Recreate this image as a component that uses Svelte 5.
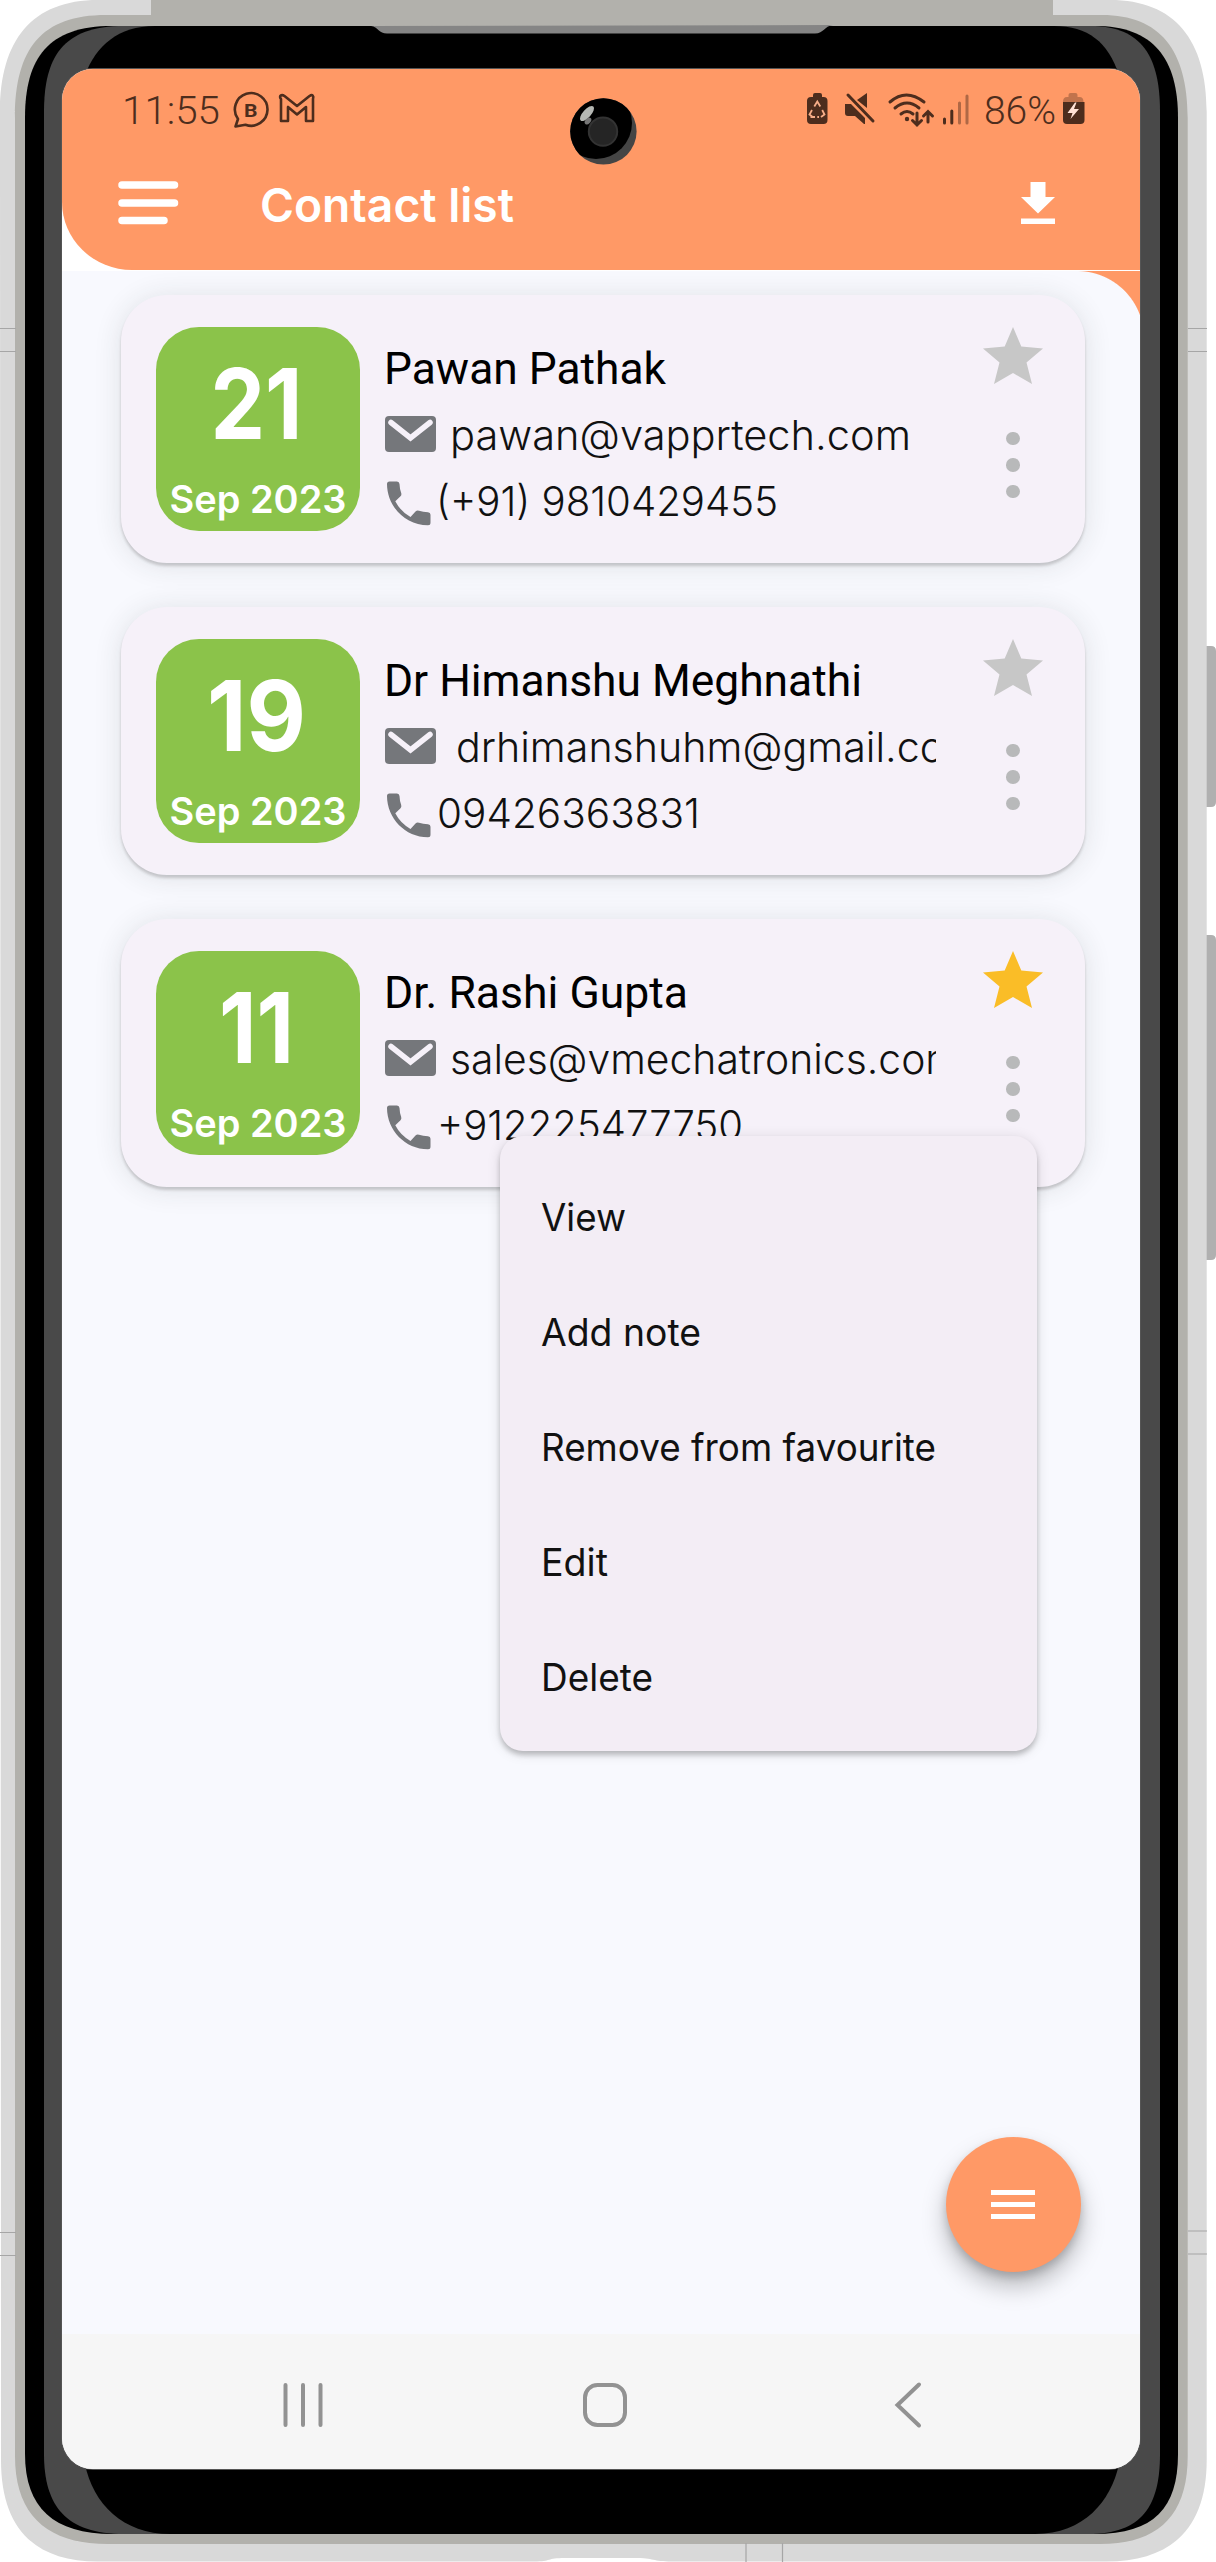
<script>
  const contacts = [
    { day: '21', dayWidth: 92, date: 'Sep 2023', name: 'Pawan Pathak', nameWidth: 282, email: 'pawan@vapprtech.com', emailX: 65, emailWidth: 461, phone: '(+91) 9810429455', phoneX: 51, phoneWidth: 342, starred: false },
    { day: '19', dayWidth: 99, date: 'Sep 2023', name: 'Dr Himanshu Meghnathi', nameWidth: 478, email: 'drhimanshuhm@gmail.com', emailX: 71, emailWidth: 524, phone: '09426363831', phoneX: 52, phoneWidth: 263, starred: false },
    { day: '11', dayWidth: 75, date: 'Sep 2023', name: 'Dr. Rashi Gupta', nameWidth: 304, email: 'sales@vmechatronics.com', emailX: 65, emailWidth: 511, phone: '+912225477750', phoneX: 52, phoneWidth: 306, starred: true }
  ];

  const menuItems = [
    { label: 'View', width: 85 },
    { label: 'Add note', width: 160 },
    { label: 'Remove from favourite', width: 395 },
    { label: 'Edit', width: 67 },
    { label: 'Delete', width: 112 }
  ];
</script>

<main class="device">
  <svg class="frame" viewBox="0 0 1216 2562" aria-hidden="true">
    <path fill="#b0b0b0" d="M1200 646h11q5 0 5 5v151q0 5-5 5h-11zM1200 935h11q5 0 5 5v315q0 5-5 5h-11z" />
    <path fill="#d9d9d9" d="M0 112C0 40 32 0 98 0H1110C1175 0 1206.700 40 1206.700 112V2460C1206.700 2528 1172 2561.500 1106 2561.500H672C652 2561.500 655 2558 634 2558H565C546 2558 552 2561.500 534 2561.500H98C34 2561.500 1 2528 1 2460Z" />
    <path fill="#b2b1ac" d="M15 118C15 48 42 15 106 15H151V0H1053V15H1102C1160 15 1187.700 50 1187.700 118V2456C1187.700 2516 1158 2544 1100 2544H108C48 2544 15 2516 15 2456Z" />
    <path fill="#000" d="M25 118C25 58 48 26 112 26H1095C1153 26 1178 58 1178 118V2454C1178 2508 1154 2534 1095 2534H112C54 2534 25 2508 25 2454Z" />
    <path fill="#494949" d="M44 112C44 58 62 26 124 26H1090C1143 26 1160 58 1160 112V2454C1160 2506 1142 2534 1088 2534H124C66 2534 44 2506 44 2454Z" />
    <path fill="#000" d="M85 75C96 46 118 26 155 26H1054C1088 26 1108 42 1119 75V2464C1111 2501 1084 2534 1035 2534H170C123 2534 93 2504 85 2464Z" />
    <path fill="#858585" d="M371 26C378 27 379 33.500 387 33.500H815C824 33.500 824 26 833 25Z" />
    <path stroke="#a6a6a6" stroke-width="1.200" d="M0 328.500H16M0 351.500H16M1188 328.500H1207M1188 351.500H1207M0 2232.500H16M0 2255.500H16M1188 2231H1207M1188 2254H1207M746 2543V2562M782.500 2543V2562" />
  </svg>

  <section class="screen">
    <header class="header">
      <div class="status">
        <svg class="status-left" viewBox="0 0 210 50">
          <text x="0" y="33.500" font-size="38" textLength="98" lengthAdjust="spacingAndGlyphs">11:55</text>
          <g class="outline">
            <path d="M117 36.500L119.500 29A16.300 16.300 0 1 1 127 34.700Z" />
            <path d="M162.500 9C160 6 163 4 166 6L178.500 16L191 6C194 4 195.500 6 194.500 9V31H187.500V17L178.500 24.500L169.500 17V31H162.500Z" />
          </g>
          <text class="badge" x="122" y="27" font-size="19" textLength="13.500" lengthAdjust="spacingAndGlyphs">B</text>
        </svg>
        <svg class="status-right" viewBox="0 0 290 50">
          <path d="M7 7V5q0-2 2-2h5q2 0 2 2v2h1.500q4 0 4 4v19q0 4-4 4H5q-4 0-4-4V11q0-4 4-4z" />
          <path class="pale" d="M8.300 16.500L11.300 11.500L14.300 16.500M16.200 20L18.500 24.500L15 27M11.300 27H13M6.700 27L3.500 24.500L6 20M9 27H4.500" />
          <path d="M39 14H45L59 28V34H58L49 26H42Q39 26 39 23Z" />
          <path d="M51 10L61 3V18Z" />
          <path class="thick" d="M42 5L67 31" />
          <path class="thick" d="M84 12Q100-2 118 12M89 18Q101 8 113 18M95 24Q101 19 107 24" />
          <circle cx="101" cy="29" r="2.200" />
          <path class="thick" d="M111 23V35M106.500 30.500L111 35L115.500 30.500M122 32V22M117.500 26L122 21.500L126.500 26" />
          <path class="thick" d="M138.500 29V33M145.800 21V33" />
          <path class="thick faint" d="M153.500 13V33M161 6V33" />
          <text x="178" y="33.500" font-size="38" textLength="72" lengthAdjust="spacingAndGlyphs">86%</text>
          <path class="ghost" d="M262.500 7V5q0-2 2-2h5q2 0 2 2v2h2q4 0 4 5H257q0-5 4-5z" />
          <path d="M257 12H278.500V30q0 4-4 4H261q-4 0-4-4z" />
          <path fill="#ffe2d5" d="M269 12.500L261.500 23H266.500L264.500 29L273 19H268L270.500 12.500Z" />
        </svg>
      </div>
      <div class="toolbar">
        <svg class="hamburger" viewBox="0 0 60 44"><path d="M4 4H56.500M4 22H56.500M4 39.500H46" /></svg>
        <svg class="title" viewBox="0 0 260 60"><text x="0" y="41" font-size="47" textLength="254" lengthAdjust="spacingAndGlyphs">Contact list</text></svg>
        <svg class="download" viewBox="0 0 34 42"><path d="M9.500 0H24.500V15H34L17 31.500L0 15H9.500ZM0 36.500H34V42H0Z" /></svg>
      </div>
    </header>

    <div class="content">
      <div class="list">
        {#each contacts as c}
          <article class="card">
            <div class="tile">
              <svg viewBox="0 0 204 204">
                <text class="day" x={100.5 - c.dayWidth / 2} y="111.500" font-size="98" textLength={c.dayWidth} lengthAdjust="spacingAndGlyphs">{c.day}</text>
                <text class="date" x="13.500" y="186" font-size="38.500" textLength="177" lengthAdjust="spacingAndGlyphs">{c.date}</text>
              </svg>
            </div>
            <div class="info">
              <svg class="name" viewBox="0 0 552 66"><text x="-1" y="57" font-size="44" textLength={c.nameWidth} lengthAdjust="spacingAndGlyphs">{c.name}</text></svg>
              <svg class="line" viewBox="0 0 552 67">
                <rect x="0" y="23" width="51" height="36" rx="4" />
                <path class="flap" d="M6 29.500L25.500 45L45 29.500" />
                <text x={c.emailX} y="57" font-size="41" textLength={c.emailWidth} lengthAdjust="spacingAndGlyphs">{c.email}</text>
              </svg>
              <svg class="line" viewBox="0 0 552 67">
                <path d="M4.500 21.500H12Q14.300 21.500 14.500 24Q14.700 29 16.200 33Q16.800 35 15.500 36.300L10.300 41.300Q15.500 51.500 25.500 56.900L30.500 51.500Q32 50.200 34 50.800Q38 52 43 52.200Q45.500 52.400 45.500 54.700V62.800Q45.500 65.300 43 65.300C20 65.300 2 46 2 24Q2 21.500 4.500 21.500Z" />
                <text x={c.phoneX} y="56" font-size="41" textLength={c.phoneWidth} lengthAdjust="spacingAndGlyphs">{c.phone}</text>
              </svg>
            </div>
            <div class="actions">
              <svg class="star" class:starred={c.starred} viewBox="0 0 60 57"><path d="M30 0L38.300 19.500L60 21.500L43.500 35.500L49 57L30 46L11 57L16.500 35.500L0 21.500L21.700 19.500Z" /></svg>
              <div class="dots"><i></i><i></i><i></i></div>
            </div>
          </article>
        {/each}
      </div>
      <button class="fab" aria-label="Menu"><svg viewBox="0 0 44 29"><path d="M0 0H44V5H0ZM0 12H44V17H0ZM0 24H44V29H0Z" /></svg></button>
    </div>

    <nav class="nav">
      <svg viewBox="0 0 44 46"><path d="M4.500 3V43M22 3V43M39.500 3V43" /></svg>
      <svg viewBox="0 0 44 46"><rect x="2" y="3" width="40" height="40" rx="12.500" /></svg>
      <svg viewBox="0 0 44 46"><path d="M34 2.500L12.500 23L34 43.500" /></svg>
    </nav>
  </section>

  <div class="menu">
    {#each menuItems as item}
      <svg viewBox="0 0 460 115"><text x="0" y="74" font-size="38" textLength={item.width} lengthAdjust="spacingAndGlyphs">{item.label}</text></svg>
    {/each}
  </div>

  <svg class="camera" viewBox="570 98 67 67" aria-hidden="true">
    <clipPath id="camera-body"><circle cx="603.400" cy="131.400" r="33.200" /></clipPath>
    <g clip-path="url(#camera-body)">
      <rect x="570" y="98" width="67" height="67" fill="#454545" />
      <circle cx="596" cy="123" r="36" />
    </g>
    <circle cx="603" cy="131.600" r="14.200" fill="#252525" stroke="#333" stroke-width="2" />
    <ellipse cx="587" cy="113.500" rx="9.500" ry="4" fill="#b5b8b4" transform="rotate(-48 587 113.500)" />
    <ellipse cx="588" cy="121" rx="4" ry="2.600" fill="#777" transform="rotate(-48 588 121)" />
  </svg>
</main>

<style>
  :global(body) { margin: 0; background: #fff; }

  .device { position: relative; width: 1216px; height: 2562px; box-sizing: border-box; padding: 69px 0 0 62px; overflow: hidden; font-family: Inter, "Liberation Sans", sans-serif; }
  .frame { position: absolute; inset: 0; width: 1216px; height: 2562px; }
  svg { display: block; flex: none; overflow: visible; }

  .screen { position: relative; display: flex; flex-direction: column; width: 1078px; height: 2400px; border-radius: 31px; overflow: hidden; background: #fff; box-shadow: 0 0 0 1px #555; }

  .header { height: 201px; flex: none; background: #ff9966; border-bottom-left-radius: 70px 68px; }
  .status { display: flex; justify-content: space-between; height: 72px; padding: 21px 44px 0 60px; box-sizing: border-box; }
  .status-left { width: 210px; height: 50px; }
  .status-left .outline { transform: translateX(-3.5px); }
  .status-right { width: 290px; height: 50px; }
  .status svg { fill: #4d2d1d; }
  .status text { font-family: Roboto, sans-serif; font-weight: 350; }
  .status .badge { font-family: Roboto, sans-serif; font-weight: 700; }
  .outline { fill: none; stroke: #4d2d1d; stroke-width: 2.6; stroke-linejoin: round; }
  .thick { fill: none; stroke: #4d2d1d; stroke-width: 3; stroke-linecap: round; }
  .pale { fill: none; stroke: #f6ad88; stroke-width: 1.8; }
  .faint { opacity: 0.45; }
  .ghost { opacity: 0.35; }

  .toolbar { display: flex; align-items: flex-start; padding: 40px 85.5px 0 55.5px; }
  .hamburger { width: 60px; height: 44px; }
  .hamburger path { stroke: #fff; stroke-width: 7.5; stroke-linecap: round; }
  .title { width: 260px; height: 60px; margin-left: 82px; fill: #fff; font-weight: 600; }
  .download { width: 34px; height: 42px; margin: 0.5px 0 0 auto; fill: #fff; }

  .content { position: relative; flex: 1; background: radial-gradient(circle at 0 100%, #f8f9fe 66.5px, #ff9966 67.5px) top right / 63.5px 67px no-repeat, #f8f9fe; margin-top: 1px; }
  .list { display: flex; flex-direction: column; gap: 44px; padding: 24px 55px 0 59px; }
  .card { display: flex; height: 268px; box-sizing: border-box; padding: 32px 35px; border-radius: 46px; background: #f6f1f9; box-shadow: 0 3px 3px rgba(0, 0, 0, 0.17), 0 2px 28px rgba(40, 50, 50, 0.12); }
  .tile { width: 204px; height: 204px; flex: none; border-radius: 43px; background: #8bc34a; }
  .tile svg { width: 204px; height: 204px; fill: #fff; font-weight: 600; }
  .day { font-weight: 650; }
  .info { width: 559px; box-sizing: border-box; padding-left: 8px; margin-left: 17px; display: flex; flex-direction: column; overflow: hidden; }
  .info svg { width: 552px; fill: #75777b; }
  .info text { fill: #111; font-weight: 300; }
  .info .name { height: 66px; }
  .info .name text { font-family: Roboto, sans-serif; font-weight: 400; fill: #000; }
  .line { height: 67px; }
  .flap { fill: none; stroke: #f6f1f9; stroke-width: 5.5; stroke-linecap: round; }
  .actions { display: flex; flex-direction: column; align-items: center; width: 60px; margin-left: 47px; }
  .star { width: 60px; height: 57px; fill: #c7c7c7; }
  .starred { fill: #fabd27; }
  .dots { display: flex; flex-direction: column; gap: 13px; margin-top: 47.5px; }
  .dots i { width: 13.5px; height: 13.5px; border-radius: 50%; background: #b8b9ba; }

  .fab { position: absolute; right: 59.5px; bottom: 62px; display: grid; place-items: center; width: 135px; height: 135px; padding: 0; border: 0; border-radius: 50%; background: #ff9966; box-shadow: 0 14px 24px rgba(0, 0, 0, 0.26), 0 5px 8px rgba(0, 0, 0, 0.16); }
  .fab svg { width: 44px; height: 29px; fill: #fff; }

  .nav { display: flex; justify-content: space-between; height: 135px; flex: none; box-sizing: border-box; padding: 48px 211px 0 219px; background: #f6f6f6; }
  .nav svg { width: 44px; height: 46px; fill: none; stroke: #929292; stroke-width: 4; stroke-linecap: round; }

  .menu { position: absolute; left: 499.5px; top: 1136px; width: 537px; height: 615px; box-sizing: border-box; padding: 20.5px 0 0 41px; border-radius: 23px; background: #f3edf5; box-shadow: 0 4px 5px rgba(0, 0, 0, 0.2), 0 2px 14px rgba(0, 0, 0, 0.12); }
  .menu svg { width: 460px; height: 115.2px; fill: #111; font-weight: 400; }

  .camera { position: absolute; left: 570px; top: 98px; width: 67px; height: 67px; }
</style>
